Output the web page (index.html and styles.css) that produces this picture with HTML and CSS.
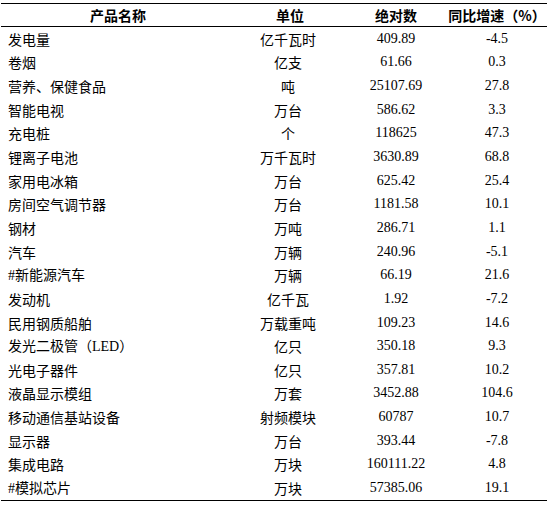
FILE: index.html
```html
<!DOCTYPE html>
<html lang="zh-CN">
<head>
  <meta charset="UTF-8">
  <title>主要产品产量</title>
  <link rel="stylesheet" href="styles.css">
</head>
<body>
  <table class="output-table">
    <colgroup>
      <col class="col-name">
      <col class="col-unit">
      <col class="col-num">
      <col class="col-pct">
    </colgroup>
    <thead>
      <tr>
        <th>产品名称</th>
        <th>单位</th>
        <th>绝对数</th>
        <th>同比增速（%）</th>
      </tr>
    </thead>
    <tbody>
      <tr><td class="name">发电量</td><td class="unit">亿千瓦时</td><td class="num">409.89</td><td class="num">-4.5</td></tr>
      <tr><td class="name">卷烟</td><td class="unit">亿支</td><td class="num">61.66</td><td class="num">0.3</td></tr>
      <tr><td class="name">营养、保健食品</td><td class="unit">吨</td><td class="num">25107.69</td><td class="num">27.8</td></tr>
      <tr><td class="name">智能电视</td><td class="unit">万台</td><td class="num">586.62</td><td class="num">3.3</td></tr>
      <tr><td class="name">充电桩</td><td class="unit">个</td><td class="num">118625</td><td class="num">47.3</td></tr>
      <tr><td class="name">锂离子电池</td><td class="unit">万千瓦时</td><td class="num">3630.89</td><td class="num">68.8</td></tr>
      <tr><td class="name">家用电冰箱</td><td class="unit">万台</td><td class="num">625.42</td><td class="num">25.4</td></tr>
      <tr><td class="name">房间空气调节器</td><td class="unit">万台</td><td class="num">1181.58</td><td class="num">10.1</td></tr>
      <tr><td class="name">钢材</td><td class="unit">万吨</td><td class="num">286.71</td><td class="num">1.1</td></tr>
      <tr><td class="name">汽车</td><td class="unit">万辆</td><td class="num">240.96</td><td class="num">-5.1</td></tr>
      <tr><td class="name"><span class="latin">#</span>新能源汽车</td><td class="unit">万辆</td><td class="num">66.19</td><td class="num">21.6</td></tr>
      <tr><td class="name">发动机</td><td class="unit">亿千瓦</td><td class="num">1.92</td><td class="num">-7.2</td></tr>
      <tr><td class="name">民用钢质船舶</td><td class="unit">万载重吨</td><td class="num">109.23</td><td class="num">14.6</td></tr>
      <tr><td class="name">发光二极管（<span class="latin">LED</span>）</td><td class="unit">亿只</td><td class="num">350.18</td><td class="num">9.3</td></tr>
      <tr><td class="name">光电子器件</td><td class="unit">亿只</td><td class="num">357.81</td><td class="num">10.2</td></tr>
      <tr><td class="name">液晶显示模组</td><td class="unit">万套</td><td class="num">3452.88</td><td class="num">104.6</td></tr>
      <tr><td class="name">移动通信基站设备</td><td class="unit">射频模块</td><td class="num">60787</td><td class="num">10.7</td></tr>
      <tr><td class="name">显示器</td><td class="unit">万台</td><td class="num">393.44</td><td class="num">-7.8</td></tr>
      <tr><td class="name">集成电路</td><td class="unit">万块</td><td class="num">160111.22</td><td class="num">4.8</td></tr>
      <tr><td class="name"><span class="latin">#</span>模拟芯片</td><td class="unit">万块</td><td class="num">57385.06</td><td class="num">19.1</td></tr>
    </tbody>
  </table>
</body>
</html>
```

FILE: styles.css
```css
body {
  margin: 0;
  padding: 3px 4px 0 1px;
  background-color: #ffffff;
  color: #000000;
  font-family: "Noto Sans CJK SC", "Liberation Sans", sans-serif;
  font-size: 14px;
}

.output-table {
  width: 546px;
  border-collapse: collapse;
  table-layout: fixed;
  border-top: 1px solid #000;
  border-bottom: 1.5px solid #000;
}

.col-name { width: 234px; }
.col-unit { width: 110px; }
.col-num  { width: 102px; }
.col-pct  { width: 100px; }

.output-table th {
  height: 22px;
  padding: 0;
  font-size: 14px;
  font-weight: bold;
  text-align: center;
  border-bottom: 1px solid #000;
  line-height: 22px;
}

.output-table td {
  height: 23.65px;
  padding: 0;
  line-height: 20px;
  white-space: nowrap;
}

.name {
  padding-left: 7px !important;
  text-align: left;
}

.unit {
  text-align: center;
  padding-right: 4px !important;
}

.num {
  text-align: center;
  font-family: "Liberation Serif", "Noto Sans CJK SC", serif;
  font-size: 14px;
}

.latin {
  font-family: "Liberation Serif", serif;
}
```
